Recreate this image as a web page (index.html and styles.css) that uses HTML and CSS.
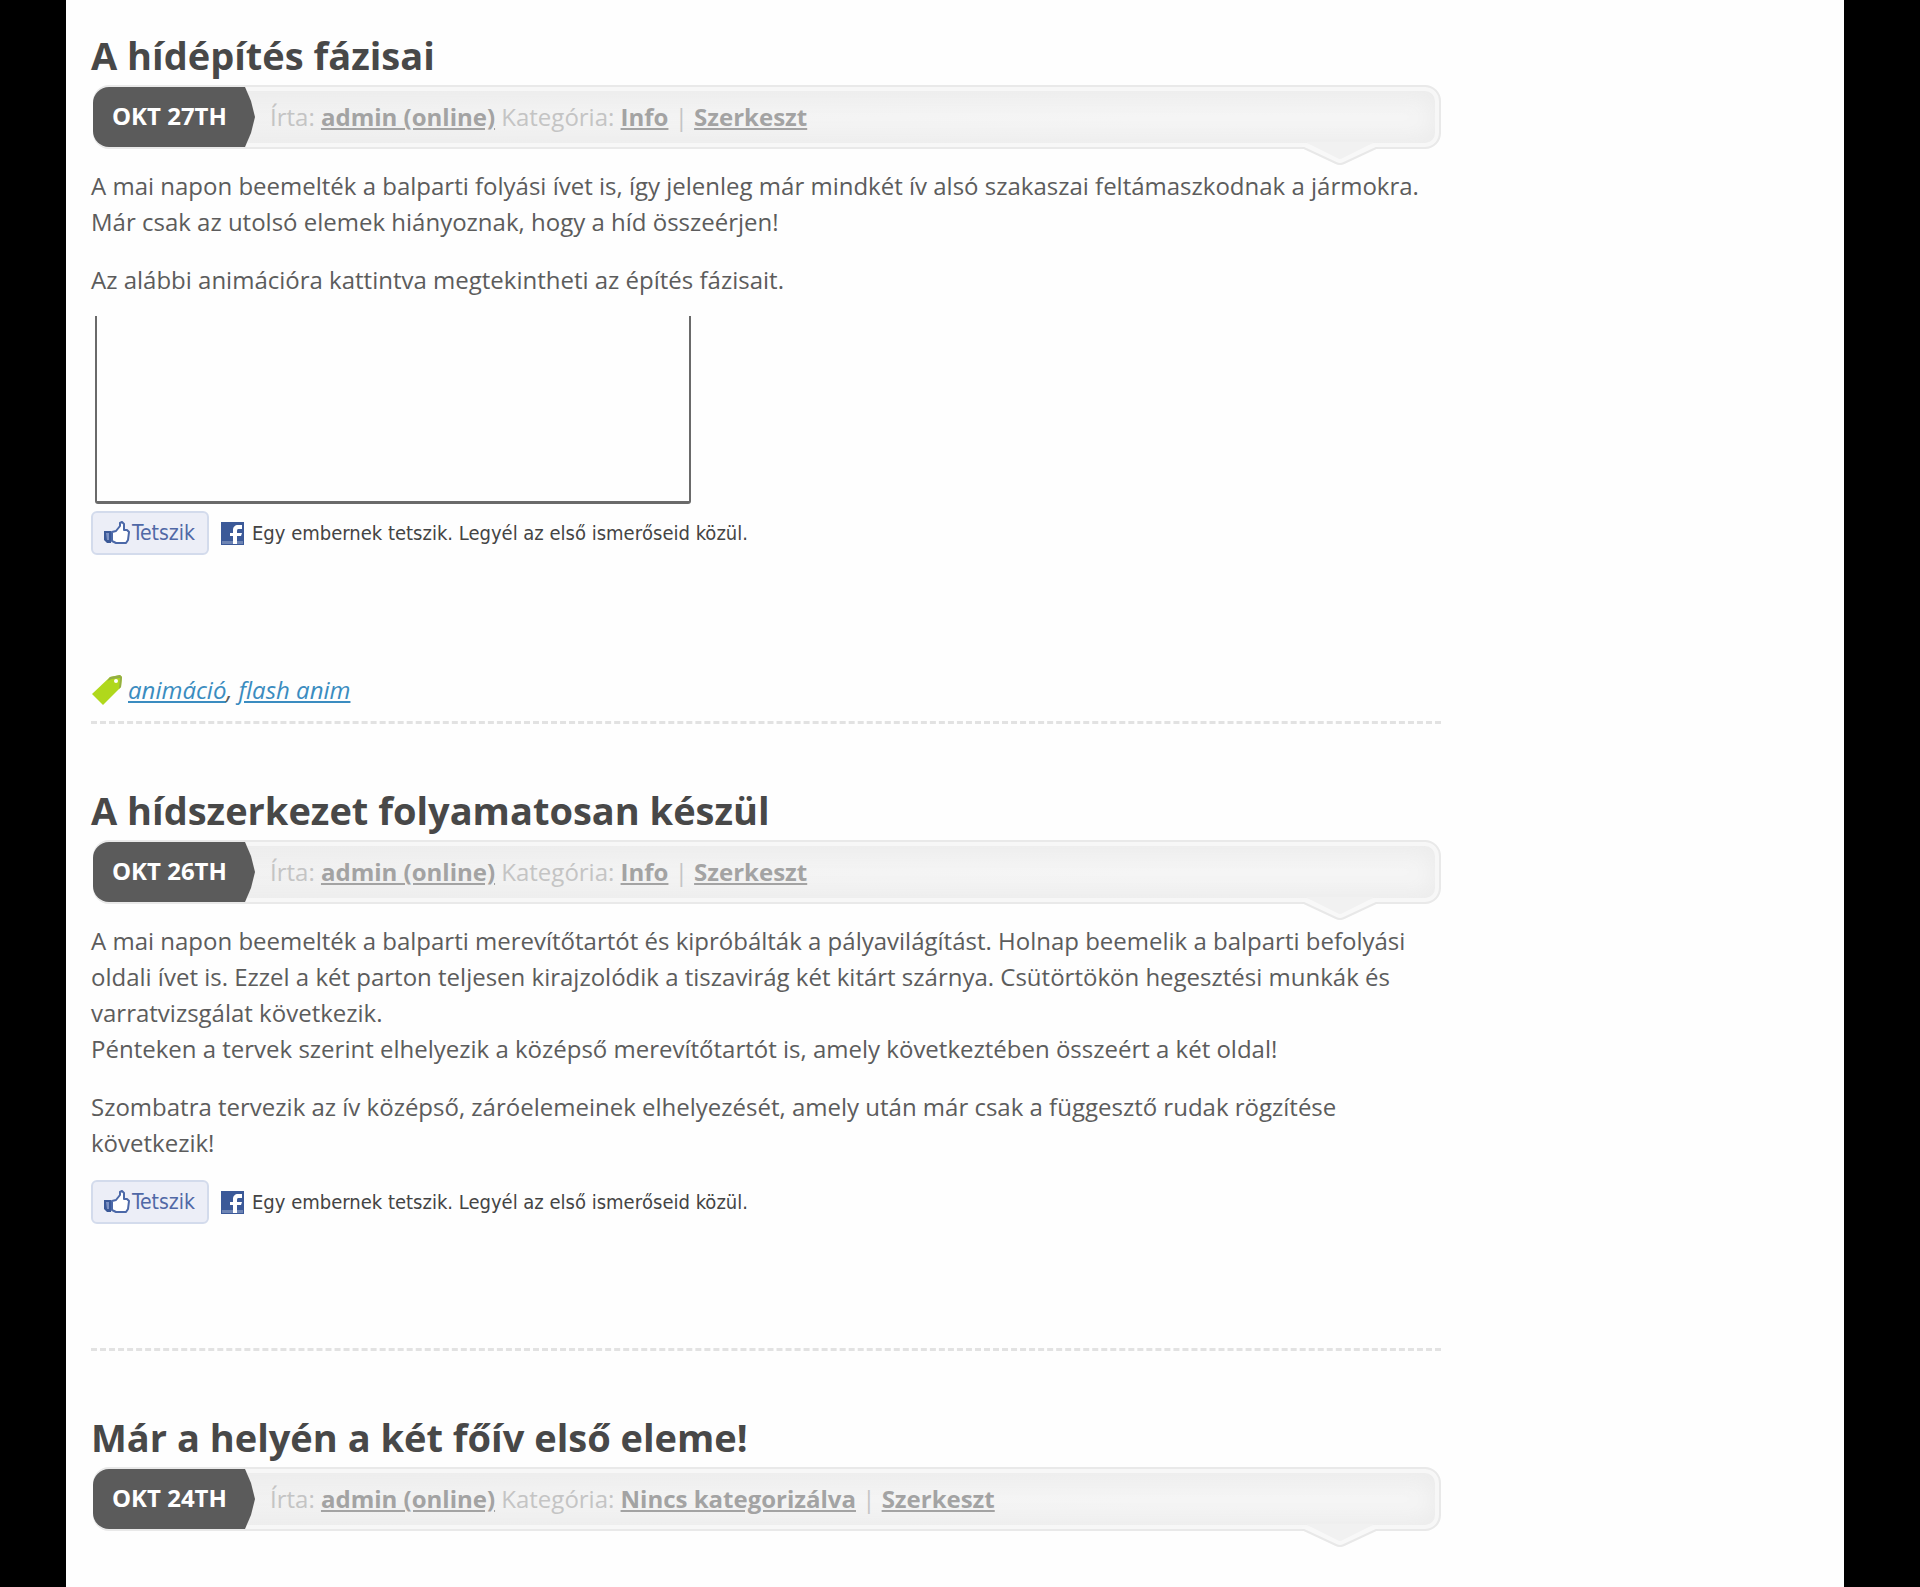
FILE: index.html
```html
<!DOCTYPE html>
<html lang="hu">
<head>
<meta charset="utf-8">
<title>Hírek</title>
<link rel="stylesheet" href="styles.css">
</head>
<body>
<svg class="defs" width="0" height="0" aria-hidden="true">
  <symbol id="thumb" viewBox="0 0 27 24">
    <path d="M1 10h7v12H4l-3-3z" fill="#3b5998"/>
    <path d="M9 11l4-1 4-5V2l2-1 2 2v6h3l2 2-1 8-2 3H13l-4-2z" fill="#fff" stroke="#4b68a8" stroke-width="2" stroke-linejoin="round"/>
    <path d="M3 12h3v7H4z" fill="#7d92c4"/>
  </symbol>
  <symbol id="fb" viewBox="0 0 23 23">
    <path d="M0 0h23v23H0z" fill="#3b5998"/>
    <path d="M1 19h21v3H1z" fill="#6d84b4"/>
    <path d="M12 22v-8h-3v-3h3V8c0-3 2-5 5-5h4v4h-3c-1 0-2 0-2 2v2h5l-1 3h-4v8z" fill="#fff"/>
  </symbol>
  <symbol id="tail" viewBox="0 0 76 24">
    <path d="M0 3h76v3h-2L42 22q-4 2-8 0L2 6H0z" fill="#f8f8f8"/>
    <path d="M5 0h66v1L41 16q-3 2-6 0L5 1z" fill="#f1f1f1"/>
    <path d="M0 6h2l32 15q4 2 8 0L74 6h2" fill="none" stroke="#e8e8e8" stroke-width="2"/>
  </symbol>
</svg>
<main class="page">
  <div class="posts">
    <article class="post">
      <h2 class="title">A hídépítés fázisai</h2>
      <div class="meta">
        <span class="date">OKT 27TH</span>
        <p class="byline">Írta: <a href="#">admin (online)</a> Kategória: <a href="#">Info</a> | <a href="#">Szerkeszt</a></p>
        <svg class="tail"><use href="#tail"/></svg>
      </div>
      <div class="text">
        <p>A mai napon beemelték a balparti folyási ívet is, így jelenleg már mindkét ív alsó szakaszai feltámaszkodnak a jármokra.<br>Már csak az utolsó elemek hiányoznak, hogy a híd összeérjen!</p>
        <p>Az alábbi animációra kattintva megtekintheti az építés fázisait.</p>
      </div>
      <div class="movie"></div>
      <div class="social">
        <button class="like" type="button"><svg class="thumb"><use href="#thumb"/></svg>Tetszik</button>
        <svg class="fb"><use href="#fb"/></svg>
        <span>Egy embernek tetszik. Legyél az első ismerőseid közül.</span>
      </div>
      <div class="tags">
        <svg class="tag" viewBox="0 0 32 32"><path d="M1 20L19 3l10-2 2 2-1 10L12 31z" fill="#b0d81c"/><path d="M19 3l10-2 2 2-1 10-2 2 1-11-8 1-5 2z" fill="#93ad45"/><circle cx="25" cy="7" r="2" fill="#fff"/></svg>
        <span><a href="#">animáció</a>, <a href="#">flash anim</a></span>
      </div>
    </article>
    <article class="post">
      <h2 class="title">A hídszerkezet folyamatosan készül</h2>
      <div class="meta">
        <span class="date">OKT 26TH</span>
        <p class="byline">Írta: <a href="#">admin (online)</a> Kategória: <a href="#">Info</a> | <a href="#">Szerkeszt</a></p>
        <svg class="tail"><use href="#tail"/></svg>
      </div>
      <div class="text">
        <p>A mai napon beemelték a balparti merevítőtartót és kipróbálták a pályavilágítást. Holnap beemelik a balparti befolyási<br>oldali ívet is. Ezzel a két parton teljesen kirajzolódik a tiszavirág két kitárt szárnya. Csütörtökön hegesztési munkák és<br>varratvizsgálat következik.<br>Pénteken a tervek szerint elhelyezik a középső merevítőtartót is, amely következtében összeért a két oldal!</p>
        <p>Szombatra tervezik az ív középső, záróelemeinek elhelyezését, amely után már csak a függesztő rudak rögzítése<br>következik!</p>
      </div>
      <div class="social">
        <button class="like" type="button"><svg class="thumb"><use href="#thumb"/></svg>Tetszik</button>
        <svg class="fb"><use href="#fb"/></svg>
        <span>Egy embernek tetszik. Legyél az első ismerőseid közül.</span>
      </div>
      <div class="tags"></div>
    </article>
    <article class="post">
      <h2 class="title">Már a helyén a két főív első eleme!</h2>
      <div class="meta">
        <span class="date">OKT 24TH</span>
        <p class="byline">Írta: <a href="#">admin (online)</a> Kategória: <a href="#">Nincs kategorizálva</a> | <a href="#">Szerkeszt</a></p>
        <svg class="tail"><use href="#tail"/></svg>
      </div>
    </article>
  </div>
</main>
</body>
</html>
```
FILE: styles.css
```css
* { box-sizing: border-box; }
html { background: #000; }
body {
  margin: 0;
  padding: 0 76px 0 66px;
  color: #5c5c5c;
  font: 24px/36px "Open Sans", "Noto Sans", sans-serif;
}
.defs { position: absolute; }
h2, p { margin: 0; }
.page {
  min-height: 100vh;
  padding: 27px 403px 39px 25px;
  background: #fefefe;
}
.post + .post { padding-top: 58px; }
.title {
  padding-bottom: 2px;
  color: #484848;
  font-size: 38px;
  line-height: 56px;
  font-weight: 700;
}
.meta {
  position: relative;
  display: flex;
  align-items: center;
  height: 64px;
  margin-left: 2px;
  background: radial-gradient(ellipse at 90% 55%, #f5f5f5 10%, #efefef 100%);
  border: 2px solid #e9e9e9;
  border-radius: 16px;
  box-shadow: inset 0 0 0 4px #f7f7f7, inset 0 0 24px 6px #ebebeb;
}
.date {
  width: 162px;
  height: 60px;
  margin-left: -2px;
  padding-left: 19px;
  background: #5b5b5b;
  border-radius: 16px 0 0 16px;
  clip-path: polygon(0 0, 152px 0, 158px 14px, 162px 30px, 158px 46px, 152px 100%, 0 100%);
  color: #fff;
  font-weight: 700;
  line-height: 58px;
}
.byline { padding-left: 15px; color: #c4c4c4; }
.byline a { color: #a3a3a3; font-weight: 700; }
.tail {
  position: absolute;
  top: 55px;
  right: 61px;
  width: 76px;
  height: 24px;
}
.text { padding-top: 19px; white-space: nowrap; }
.text p + p { margin-top: 22px; }
.movie {
  width: 596px;
  height: 188px;
  margin: 18px 0 -12px 4px;
  border: solid #6a6a6a;
  border-width: 0 2px 3px;
  border-radius: 0 0 3px 3px;
}
.social {
  display: flex;
  align-items: center;
  height: 44px;
  margin-top: 19px;
  color: #444;
  font: 20px/28px "DejaVu Sans Condensed", "DejaVu Sans", sans-serif;
}
.like {
  display: flex;
  align-items: center;
  width: 118px;
  height: 44px;
  padding: 0 0 0 10px;
  background: #eceef7;
  border: 2px solid #d3dbec;
  border-radius: 6px;
  color: #5068a6;
  font: inherit;
  font-size: 21px;
}
.thumb { width: 27px; height: 24px; margin-right: 2px; }
.fb { width: 23px; height: 23px; margin: 0 8px 0 12px; }
.tags {
  display: flex;
  align-items: center;
  height: 169px;
  padding-top: 103px;
  border-bottom: 3px dashed #e2e2e2;
  font-style: italic;
}
.tags:empty { height: 127px; }
.tag { width: 32px; height: 32px; margin-right: 5px; }
.tags a { color: #3a8cc0; }
```
